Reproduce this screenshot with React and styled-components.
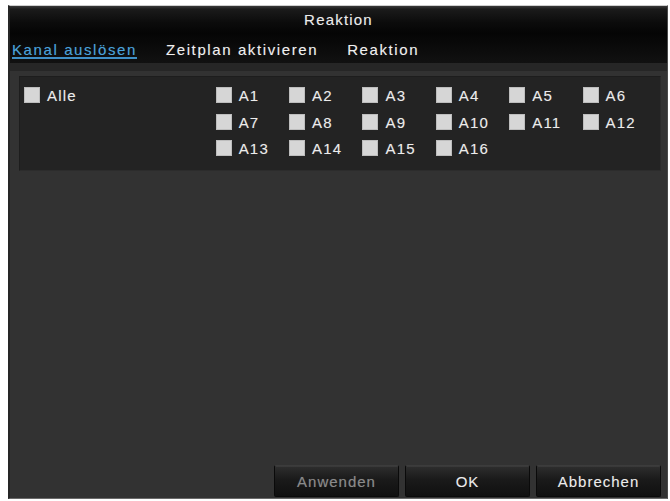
import React, { useState } from "react";
import styled, { createGlobalStyle } from "styled-components";

const GlobalStyle = createGlobalStyle`
  html, body {
    margin: 0;
    padding: 0;
    background: #ffffff;
    font-family: "Liberation Sans", Arial, sans-serif;
  }
`;

const channels = Array.from({ length: 16 }, (_, i) => `A${i + 1}`);
const tabs = ["Kanal auslösen", "Zeitplan aktivieren", "Reaktion"];

const App = () => {
  const [activeTab, setActiveTab] = useState(0);
  const [checked, setChecked] = useState({});

  const toggle = (name) => {
    setChecked((prev) => ({ ...prev, [name]: !prev[name] }));
  };

  return (
    <>
      <GlobalStyle />
      <StyledWindow>
        <StyledTitleBar>Reaktion</StyledTitleBar>
        <StyledTabBar>
          {tabs.map((tab, i) => (
            <StyledTab
              key={tab}
              $active={activeTab === i}
              onClick={() => setActiveTab(i)}
            >
              {tab}
            </StyledTab>
          ))}
        </StyledTabBar>
        <StyledSeparator />
        <StyledBody>
          <StyledGroup>
            <StyledAllColumn>
              <StyledCheckItem onClick={() => toggle("Alle")}>
                <StyledBox $checked={checked.Alle} />
                Alle
              </StyledCheckItem>
            </StyledAllColumn>
            <StyledGrid>
              {channels.map((ch) => (
                <StyledCheckItem key={ch} onClick={() => toggle(ch)}>
                  <StyledBox $checked={checked[ch]} />
                  {ch}
                </StyledCheckItem>
              ))}
            </StyledGrid>
          </StyledGroup>
          <StyledSpacer />
          <StyledButtonRow>
            <StyledButton $disabled>Anwenden</StyledButton>
            <StyledButton>OK</StyledButton>
            <StyledButton>Abbrechen</StyledButton>
          </StyledButtonRow>
        </StyledBody>
      </StyledWindow>
    </>
  );
};

export default App;

const StyledWindow = styled.div`
  margin: 5px 0 0 8px;
  width: 660px;
  height: 494px;
  display: flex;
  flex-direction: column;
  background: #323232;
  border-left: 2px solid #262626;
  border-right: 1px solid #4a4a4a;
  border-top: 1px solid #cfcfcf;
  border-bottom: 1px solid #6a6a6a;
  box-sizing: border-box;
  overflow: hidden;
`;

const StyledTitleBar = styled.div`
  height: 27px;
  display: flex;
  align-items: center;
  justify-content: center;
  background: linear-gradient(#3a3a3a 0px, #1b1b1b 3px, #0c0c0c 60%, #050505);
  color: #ececec;
  font-size: 15px;
  letter-spacing: 1.2px;
  text-shadow: 0 0 1px rgba(255, 255, 255, 0.25);
`;

const StyledTabBar = styled.div`
  height: 30px;
  display: flex;
  align-items: stretch;
  gap: 29px;
  padding-left: 2px;
  background: linear-gradient(#050505, #111111);
`;

const StyledTab = styled.div`
  display: flex;
  align-items: center;
  padding-top: 2px;
  font-size: 15px;
  letter-spacing: 1.6px;
  color: ${(p) => (p.$active ? "#4aa3dc" : "#f0f0f0")};
  text-shadow: 0 0 1px
    ${(p) => (p.$active ? "rgba(74, 163, 220, 0.3)" : "rgba(255, 255, 255, 0.25)")};
  cursor: pointer;
  position: relative;
  &::after {
    content: "";
    display: ${(p) => (p.$active ? "block" : "none")};
    position: absolute;
    left: 0;
    right: 0;
    bottom: 4px;
    height: 2px;
    background: #3f8fc6;
  }
`;

const StyledSeparator = styled.div`
  height: 8px;
  background: #262626;
`;

const StyledBody = styled.div`
  flex: 1;
  display: flex;
  flex-direction: column;
  padding: 5px 6px 1px 9px;
  background: #323232;
`;

const StyledGroup = styled.div`
  display: flex;
  height: 95px;
  box-sizing: border-box;
  padding: 10px 4px 0 4px;
  background: #232323;
  border: 1px solid #1d1d1d;
  border-right-color: #2a2a2a;
  border-bottom-color: #2c2c2c;
`;

const StyledAllColumn = styled.div`
  width: 197px;
`;

const StyledGrid = styled.div`
  display: grid;
  grid-template-columns: repeat(6, 73.4px);
  grid-auto-rows: 26.5px;
`;

const StyledCheckItem = styled.div`
  display: flex;
  align-items: flex-start;
  gap: 7px;
  height: 17px;
  font-size: 15px;
  line-height: 17px;
  letter-spacing: 1.2px;
  color: #ececec;
  text-shadow: 0 0 1px rgba(255, 255, 255, 0.25);
  cursor: pointer;
`;

const StyledBox = styled.span`
  width: 16px;
  height: 16px;
  flex-shrink: 0;
  background: ${(p) => (p.$checked ? "#8fc3e6" : "#d6d6d6")};
  border: 1px solid #bdbdbd;
  box-sizing: border-box;
`;

const StyledSpacer = styled.div`
  flex: 1;
`;

const StyledButtonRow = styled.div`
  display: flex;
  justify-content: flex-end;
  gap: 6px;
`;

const StyledButton = styled.button`
  width: 125px;
  height: 32px;
  padding: 0;
  font-family: "Liberation Sans", Arial, sans-serif;
  font-size: 15px;
  letter-spacing: 1px;
  color: ${(p) => (p.$disabled ? "#8a8a8a" : "#ececec")};
  text-shadow: 0 0 1px rgba(255, 255, 255, 0.2);
  background: linear-gradient(#2e2e2e, #1a1a1a 45%, #101010);
  border: 1px solid #0a0a0a;
  border-top-color: #3c3c3c;
  border-radius: 2px;
  box-shadow: inset 0 1px 0 rgba(255, 255, 255, 0.06);
  cursor: pointer;
`;
